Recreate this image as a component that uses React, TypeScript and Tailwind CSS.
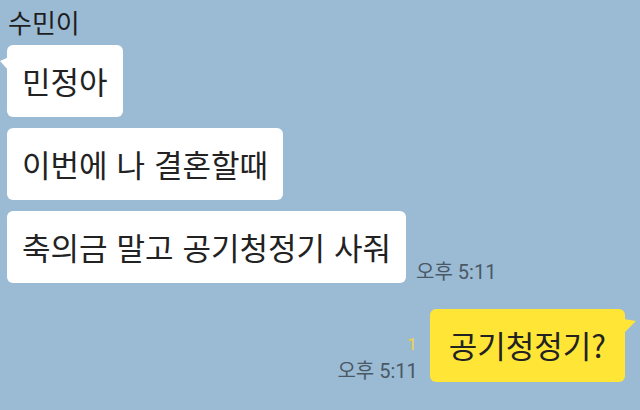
import React from 'react';

const font = { fontFamily: '"Noto Sans CJK KR", "Noto Sans", sans-serif' };
const timeFont = { fontFamily: 'Roboto, "Noto Sans CJK KR", sans-serif' };

const Bubble: React.FC<{ text: string; tail?: boolean }> = ({ text, tail }) => (
  <div className="relative">
    {tail && (
      <svg className="absolute -left-[7px] top-[12px]" width="9" height="14" viewBox="0 0 9 14">
        <path d="M9 0 L9 14 L0 4 Z" fill="#ffffff" />
      </svg>
    )}
    <div className="h-[72px] flex items-center px-[15px] bg-white rounded-[6px] text-[31px] text-[#222222] whitespace-nowrap [word-spacing:2px]">
      {text}
    </div>
  </div>
);

export default function App() {
  return (
    <div className="w-[640px] h-[410px] overflow-hidden bg-[#9bbbd4] flex flex-col" style={font}>
      <div className="pl-[7px] pt-[5px] flex flex-col">
        <span className="text-[26px] leading-[34px] text-[#1f1f1f] ml-[1px]">수민이</span>
        <div className="mt-[6px] flex flex-col gap-[11px] items-start">
          <Bubble text="민정아" tail />
          <Bubble text="이번에 나 결혼할때" />
          <div className="flex items-end gap-[10px]">
            <Bubble text="축의금 말고 공기청정기 사줘" />
            <span className="text-[20px] leading-[22px] text-[#4a5866]" style={timeFont}>오후 5:11</span>
          </div>
        </div>
      </div>
      <div className="mt-[26px] pr-[15px] flex justify-end items-end gap-[12px]">
        <div className="flex flex-col items-end">
          <span className="text-[17px] leading-[20px] text-[#f2d43a] mb-[6px] mr-[1px]" style={timeFont}>1</span>
          <span className="text-[20px] leading-[22px] text-[#4a5866]" style={timeFont}>오후 5:11</span>
        </div>
        <div className="relative">
          <div className="h-[73px] flex items-center px-[19px] bg-[#fee536] rounded-[6px] text-[31px] text-[#222222] whitespace-nowrap">
            공기청정기?
          </div>
          <svg className="absolute -right-[11px] top-[10px]" width="12" height="14" viewBox="0 0 12 14">
            <path d="M0 0 L12 2 L0 14 Z" fill="#fee536" />
          </svg>
        </div>
      </div>
    </div>
  );
}
